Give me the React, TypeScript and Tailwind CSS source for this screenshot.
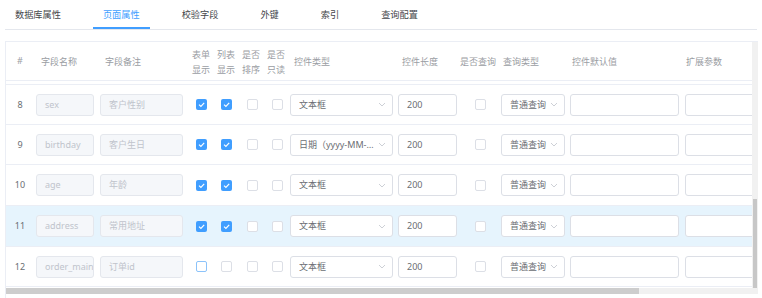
import React from "react";

type Row = {
  no: number;
  name: string;
  remark: string;
  form: boolean;
  list: boolean;
  type: string;
  height: string;
  hover?: boolean;
  focus?: boolean;
};

const rows: Row[] = [
  { no: 8, name: "sex", remark: "客户性别", form: true, list: true, type: "文本框", height: "h-[40px]" },
  { no: 9, name: "birthday", remark: "客户生日", form: true, list: true, type: "日期（yyyy-MM-dd）", height: "h-[40px]" },
  { no: 10, name: "age", remark: "年龄", form: true, list: true, type: "文本框", height: "h-[41px]" },
  { no: 11, name: "address", remark: "常用地址", form: true, list: true, type: "文本框", height: "h-[41px]", hover: true },
  { no: 12, name: "order_main_id", remark: "订单id", form: false, list: false, type: "文本框", height: "h-[40px]", focus: true },
];

const tabs = ["数据库属性", "页面属性", "校验字段", "外键", "索引", "查询配置"];

function Chevron() {
  return (
    <svg width="8" height="5" viewBox="0 0 8 5" className="shrink-0">
      <path d="M1 1 L4 4 L7 1" fill="none" stroke="#c0c4cc" strokeWidth="0.8" />
    </svg>
  );
}

function Checkbox({ checked, focus }: { checked?: boolean; focus?: boolean }) {
  if (checked) {
    return (
      <div className="w-[11px] h-[11px] rounded-[2px] bg-[#409eff] flex items-center justify-center">
        <svg width="11" height="11" viewBox="0 0 11 11">
          <path d="M3 5.6 L4.9 7.4 L8.2 3.8" fill="none" stroke="#fff" strokeWidth="1.2" />
        </svg>
      </div>
    );
  }
  return (
    <div
      className={`w-[11px] h-[11px] rounded-[2px] bg-white border ${focus ? "border-[#8cc3fa]" : "border-[#dcdfe6]"}`}
    />
  );
}

function DisabledInput({ value, w }: { value: string; w: string }) {
  return (
    <div
      className={`${w} h-[22px] rounded-[3px] border border-[#e4e7ed] bg-[#f5f7fa] pl-[8px] flex items-center text-[#c0c4cc] overflow-hidden whitespace-nowrap`}
    >
      {value}
    </div>
  );
}

function Input({ value, w }: { value?: string; w: string }) {
  return (
    <div
      className={`${w} h-[22px] shrink-0 rounded-[3px] border border-[#dcdfe6] bg-white pl-[8px] flex items-center text-[#6b6e73] overflow-hidden whitespace-nowrap`}
    >
      {value}
    </div>
  );
}

function Select({ value, w }: { value: string; w: string }) {
  return (
    <div
      className={`${w} h-[22px] rounded-[3px] border border-[#dcdfe6] bg-white pl-[8px] pr-[6px] flex items-center gap-[2px] text-[#6b6e73]`}
    >
      <span className="flex-1 truncate">{value}</span>
      <Chevron />
    </div>
  );
}

function HeaderCell({ w, pl, lines }: { w: string; pl: string; lines: string[] }) {
  return (
    <div className={`${w} ${pl} shrink-0 flex flex-col justify-center leading-[15px] pt-[1px]`}>
      {lines.map((l) => (
        <span key={l} className="whitespace-nowrap">
          {l}
        </span>
      ))}
    </div>
  );
}

export default function App() {
  return (
    <div
      className="w-[762px] h-[298px] bg-white overflow-hidden text-[9px]"
      style={{ fontFamily: '"Noto Sans", "Noto Sans CJK SC", sans-serif' }}
    >
      {/* tabs */}
      <div className="mx-[5px] w-[752px] h-[30px] border-b border-[#e4e7ed] flex gap-[22px] text-[9.2px] text-[#45474b]">
        {tabs.map((t, i) => (
          <div
            key={t}
            className={`px-[10px] h-[29px] flex items-center pt-[3px] border-b-2 ${
              i === 1 ? "border-[#409eff] text-[#409eff]" : "border-transparent"
            }`}
          >
            {t}
          </div>
        ))}
      </div>

      {/* table */}
      <div className="mt-[11px] ml-[5px] w-[753px] h-[257px] flex border-t border-[#ebeef5]">
        <div className="w-[747px] flex flex-col border-l border-[#ebeef5] overflow-hidden">
          {/* header */}
          <div className="h-[39px] shrink-0 flex border-b border-[#ebeef5] text-[#9a9da3]">
            <div className="w-[28px] shrink-0 flex items-center justify-center">#</div>
            <HeaderCell w="w-[63px]" pl="pl-[7px]" lines={["字段名称"]} />
            <HeaderCell w="w-[90px]" pl="pl-[8px]" lines={["字段备注"]} />
            <HeaderCell w="w-[25px]" pl="pl-[5px]" lines={["表单", "显示"]} />
            <HeaderCell w="w-[25px]" pl="pl-[5px]" lines={["列表", "显示"]} />
            <HeaderCell w="w-[25px]" pl="pl-[5px]" lines={["是否", "排序"]} />
            <HeaderCell w="w-[25px]" pl="pl-[5px]" lines={["是否", "只读"]} />
            <HeaderCell w="w-[108px]" pl="pl-[7px]" lines={["控件类型"]} />
            <HeaderCell w="w-[64px]" pl="pl-[7px]" lines={["控件长度"]} />
            <HeaderCell w="w-[40px]" pl="pl-[1px]" lines={["是否查询"]} />
            <HeaderCell w="w-[68px]" pl="pl-[4px]" lines={["查询类型"]} />
            <HeaderCell w="w-[115px]" pl="pl-[5px]" lines={["控件默认值"]} />
            <HeaderCell w="w-[115px]" pl="pl-[4px]" lines={["扩展参数"]} />
          </div>

          {/* tail of the previous row, scrolled out */}
          <div className="h-[4px] shrink-0 border-b border-[#ebeef5]" />

          {rows.map((r) => (
            <div
              key={r.no}
              className={`${r.height} shrink-0 flex items-center border-b border-[#ebeef5] text-[#6b6e73] ${
                r.hover ? "bg-[#e6f4fd]" : "bg-white"
              }`}
            >
              <div className="w-[28px] shrink-0 text-center">{r.no}</div>
              <div className="w-[63px] shrink-0 pl-[2px]">
                <DisabledInput value={r.name} w="w-[58px]" />
              </div>
              <div className="w-[90px] shrink-0 pl-[3px]">
                <DisabledInput value={r.remark} w="w-[83px]" />
              </div>
              <div className="w-[25px] shrink-0 pl-[9px]">
                <Checkbox checked={r.form} focus={r.focus} />
              </div>
              <div className="w-[25px] shrink-0 pl-[9px]">
                <Checkbox checked={r.list} />
              </div>
              <div className="w-[25px] shrink-0 pl-[10px]">
                <Checkbox />
              </div>
              <div className="w-[25px] shrink-0 pl-[10px]">
                <Checkbox />
              </div>
              <div className="w-[108px] shrink-0 pl-[3px]">
                <Select value={r.type} w="w-[103px]" />
              </div>
              <div className="w-[64px] shrink-0 pl-[3px]">
                <Input value="200" w="w-[59px]" />
              </div>
              <div className="w-[40px] shrink-0 pl-[16px]">
                <Checkbox />
              </div>
              <div className="w-[68px] shrink-0 pl-[2px]">
                <Select value="普通查询" w="w-[64px]" />
              </div>
              <div className="w-[115px] shrink-0 pl-[3px]">
                <Input w="w-[109px]" />
              </div>
              <div className="w-[115px] shrink-0 pl-[3px]">
                <Input w="w-[109px]" />
              </div>
            </div>
          ))}

          {/* horizontal scrollbar */}
          <div className="mt-[1px] h-[6px] shrink-0 bg-[#f1f1f1] flex">
            <div className="w-[633px] h-full bg-[#cdcdcd]" />
          </div>
        </div>

        {/* vertical scrollbar */}
        <div className="w-[6px] h-[252px] bg-[#f1f1f1] flex flex-col justify-end">
          <div className="mx-[1px] h-[89px] bg-[#c7c7c7] mb-[6px]" />
        </div>
      </div>
    </div>
  );
}
